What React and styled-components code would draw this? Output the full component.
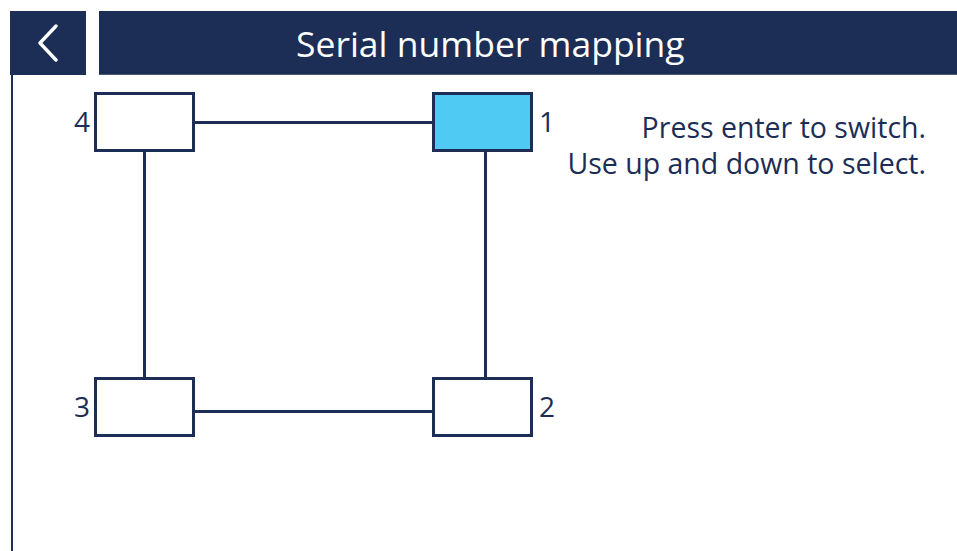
import React from 'react';
import styled, { createGlobalStyle } from 'styled-components';

const NAVY = '#1c2d56';
const SELECTED = '#4fcaf3';

const GlobalStyle = createGlobalStyle`
  html, body {
    margin: 0;
    padding: 0;
    background: #ffffff;
    font-family: "Open Sans", "Noto Sans", Arial, sans-serif;
  }
`;

const Screen = styled.div`
  width: 957px;
  height: 551px;
  overflow: hidden;
  display: flex;
  flex-direction: column;
  padding-top: 11px;
  box-sizing: border-box;
`;

const Header = styled.header`
  display: flex;
  height: 64px;
  gap: 13px;
  padding-left: 10px;
  flex-shrink: 0;
`;

const BackButton = styled.button`
  width: 76px;
  height: 64px;
  border: none;
  padding: 0;
  background: ${NAVY};
  display: flex;
  align-items: center;
  justify-content: center;
  cursor: pointer;
`;

const TitleBar = styled.div`
  flex: 1;
  background: ${NAVY};
  border-bottom: 1px solid #4b5a7c;
  display: flex;
  align-items: center;
  padding-left: 197px;
`;

const Title = styled.h1`
  margin: 0;
  color: #ffffff;
  font-weight: 400;
  font-size: 35.5px;
`;

const Body = styled.main`
  flex: 1;
  margin-left: 11px;
  border-left: 2px solid ${NAVY};
  display: flex;
  justify-content: space-between;
`;

const Canvas = styled.div`
  position: relative;
  width: 550px;
  height: 100%;
`;

const Node = styled.div`
  position: absolute;
  left: ${(p) => p.$x}px;
  top: ${(p) => p.$y}px;
  width: 101px;
  height: 60px;
  box-sizing: border-box;
  border: 3px solid ${NAVY};
  background: ${(p) => (p.$selected ? SELECTED : '#ffffff')};
`;

const NodeLabel = styled.span`
  position: absolute;
  top: 50%;
  transform: translateY(-52%);
  ${(p) => (p.$side === 'left' ? 'right: calc(100% + 7px);' : 'left: calc(100% + 9px);')}
  font-size: 28px;
  line-height: 1;
  color: ${NAVY};
`;

const Wire = styled.div`
  position: absolute;
  background: ${NAVY};
  left: ${(p) => p.$x}px;
  top: ${(p) => p.$y}px;
  width: ${(p) => p.$w}px;
  height: ${(p) => p.$h}px;
`;

const Hint = styled.div`
  padding: 34px 31px 0 0;
  text-align: right;
  color: ${NAVY};
  font-size: 28.5px;
  line-height: 36px;
  white-space: nowrap;
`;

const nodes = [
  { id: 4, x: 81, y: 17, side: 'left' },
  { id: 1, x: 419, y: 17, side: 'right', selected: true },
  { id: 3, x: 81, y: 302, side: 'left' },
  { id: 2, x: 419, y: 302, side: 'right' },
];

const wires = [
  { x: 182, y: 46, w: 237, h: 3 },
  { x: 182, y: 335, w: 237, h: 3 },
  { x: 130, y: 77, w: 3, h: 225 },
  { x: 471, y: 77, w: 3, h: 225 },
];

const Chevron = () => (
  <svg width="22" height="38" viewBox="0 0 22 38" aria-hidden>
    <polyline
      points="19,2 3,19 19,36"
      fill="none"
      stroke="#ffffff"
      strokeWidth="3.4"
      strokeLinecap="round"
      strokeLinejoin="round"
    />
  </svg>
);

export default function App() {
  return (
    <>
      <GlobalStyle />
      <Screen>
        <Header>
          <BackButton aria-label="Back">
            <Chevron />
          </BackButton>
          <TitleBar>
            <Title>Serial number mapping</Title>
          </TitleBar>
        </Header>
        <Body>
          <Canvas>
            {wires.map((w, i) => (
              <Wire key={i} $x={w.x} $y={w.y} $w={w.w} $h={w.h} />
            ))}
            {nodes.map((n) => (
              <Node key={n.id} $x={n.x} $y={n.y} $selected={n.selected}>
                <NodeLabel $side={n.side}>{n.id}</NodeLabel>
              </Node>
            ))}
          </Canvas>
          <Hint>
            Press enter to switch.
            <br />
            Use up and down to select.
          </Hint>
        </Body>
      </Screen>
    </>
  );
}
